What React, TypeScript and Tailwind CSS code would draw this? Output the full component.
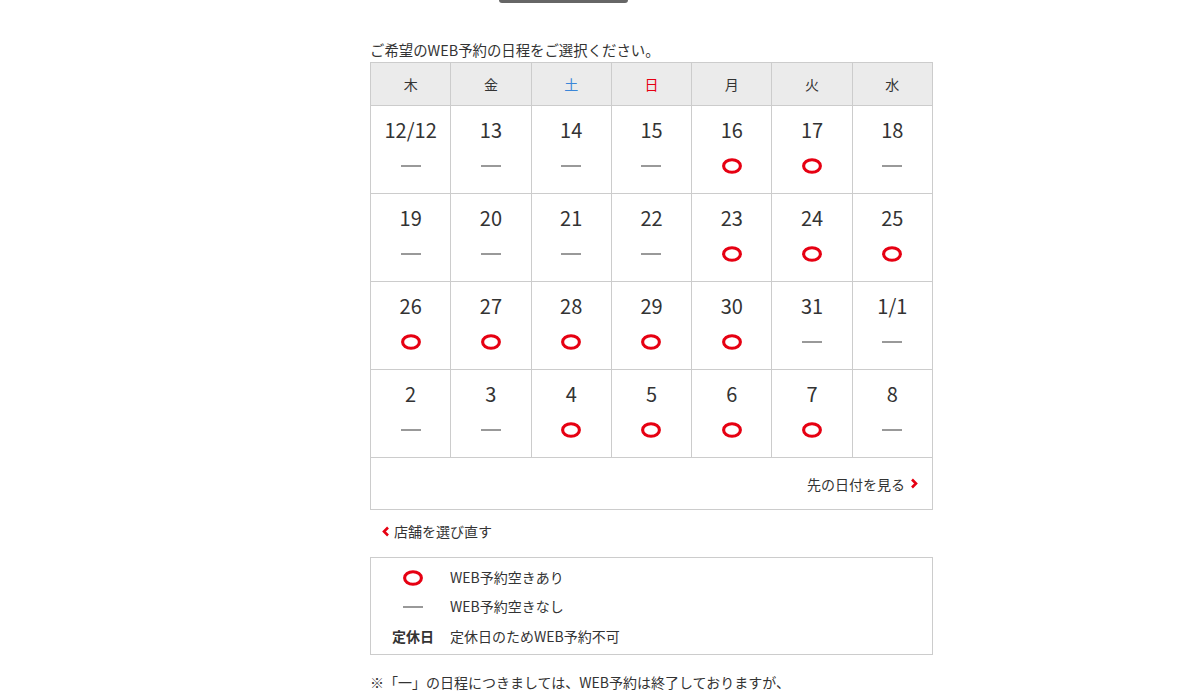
const RED = '#e60012';

type Mark = 'o' | '-';

const weekdays: { label: string; color: string }[] = [
  { label: '木', color: 'text-[#333]' },
  { label: '金', color: 'text-[#333]' },
  { label: '土', color: 'text-[#3b86d8]' },
  { label: '日', color: 'text-[#e60012]' },
  { label: '月', color: 'text-[#333]' },
  { label: '火', color: 'text-[#333]' },
  { label: '水', color: 'text-[#333]' },
];

const weeks: [string, Mark][][] = [
  [['12/12', '-'], ['13', '-'], ['14', '-'], ['15', '-'], ['16', 'o'], ['17', 'o'], ['18', '-']],
  [['19', '-'], ['20', '-'], ['21', '-'], ['22', '-'], ['23', 'o'], ['24', 'o'], ['25', 'o']],
  [['26', 'o'], ['27', 'o'], ['28', 'o'], ['29', 'o'], ['30', 'o'], ['31', '-'], ['1/1', '-']],
  [['2', '-'], ['3', '-'], ['4', 'o'], ['5', 'o'], ['6', 'o'], ['7', 'o'], ['8', '-']],
];

// available mark: an oval, a bit wider than tall
function Circle() {
  return (
    <svg width="20" height="16" viewBox="0 0 20 16" className="block">
      <ellipse cx="10" cy="8" rx="8.4" ry="6.3" fill="none" stroke={RED} strokeWidth="3.1" />
    </svg>
  );
}

function Dash() {
  return <span className="block h-[2px] w-[20px] bg-[#999]" />;
}

function Chevron({ left = false }: { left?: boolean }) {
  return (
    <svg width="8" height="11" viewBox="0 0 8 11" className="shrink-0">
      <polyline
        points={left ? '6,1.5 2,5.5 6,9.5' : '2,1.5 6,5.5 2,9.5'}
        fill="none"
        stroke={RED}
        strokeWidth="2.6"
      />
    </svg>
  );
}

export default function App() {
  return (
    <div
      className="min-h-[694px] w-full bg-white text-[#333]"
      style={{ fontFamily: '"Noto Sans CJK JP", "Noto Sans", sans-serif' }}
    >
      <div className="ml-[370px] w-[563px]">
        {/* tail of the button above */}
        <div className="ml-[129px] h-[3px] w-[129px] rounded-b-[3px] bg-[#666]" />

        <p className="mt-[37px] mb-[2px] text-[14.4px] leading-[20px]">ご希望のWEB予約の日程をご選択ください。</p>

        <table className="w-[563px] table-fixed border-collapse">
          <thead>
            <tr>
              {weekdays.map((d) => (
                <th
                  key={d.label}
                  className={`h-[43px] border border-[#ccc] bg-[#ebebeb] p-0 text-[14px] font-normal ${d.color}`}
                >
                  {d.label}
                </th>
              ))}
            </tr>
          </thead>
          <tbody>
            {weeks.map((week, i) => (
              <tr key={i}>
                {week.map(([day, mark]) => (
                  <td key={day} className="h-[88px] border border-[#ccc] p-0 align-top">
                    <div className="flex flex-col items-center pt-[12px]">
                      <span className="text-[20px] leading-[24px]">{day}</span>
                      <span className="mt-[14px] flex h-[20px] items-center">
                        {mark === 'o' ? <Circle /> : <Dash />}
                      </span>
                    </div>
                  </td>
                ))}
              </tr>
            ))}
            <tr>
              <td colSpan={7} className="h-[52px] border border-[#ccc] p-0 pr-[14px]">
                <div className="flex items-center justify-end gap-[5px] text-[14px] leading-[20px]">
                  先の日付を見る
                  <Chevron />
                </div>
              </td>
            </tr>
          </tbody>
        </table>

        <div className="mt-[11px] flex items-center gap-[4px] pl-[12px] text-[14px] leading-[20px]">
          <Chevron left />
          店舗を選び直す
        </div>

        <div className="mt-[16px] border border-[#ccc] pt-[5px] pb-[2px] pl-[9px] text-[14px]">
          <div className="flex h-[29px] items-center gap-[4px]">
            <span className="flex w-[66px] justify-center">
              <Circle />
            </span>
            <span>WEB予約空きあり</span>
          </div>
          <div className="flex h-[29px] items-center gap-[4px]">
            <span className="flex w-[66px] justify-center">
              <Dash />
            </span>
            <span>WEB予約空きなし</span>
          </div>
          <div className="flex h-[31px] items-center gap-[4px]">
            <span className="flex w-[66px] justify-center font-bold">定休日</span>
            <span>定休日のためWEB予約不可</span>
          </div>
        </div>

        <p className="mt-[17px] text-[14px] leading-[20px]">
          ※「一」の日程につきましては、WEB予約は終了しておりますが、
        </p>
      </div>
    </div>
  );
}
